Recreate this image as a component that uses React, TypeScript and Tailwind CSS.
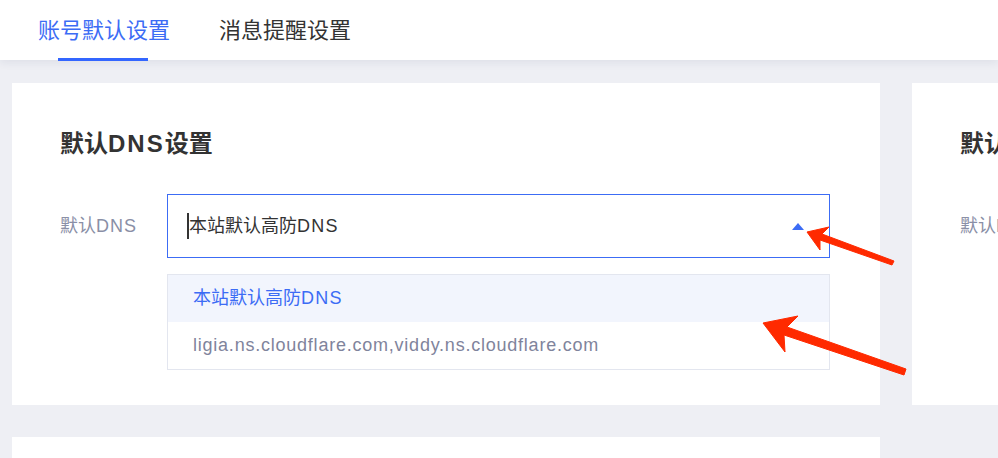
import React from 'react';

const font = { fontFamily: '"Liberation Sans", "Noto Sans CJK SC", sans-serif' };

function Arrows() {
  return (
    <svg className="absolute left-0 top-0 pointer-events-none" width="998" height="458">
      <polygon
        fill="#ff2a00"
        strokeLinejoin="round"
        stroke="#ff2a00"
        strokeWidth="1"
        points="807,232 829,227 822,234 894,261 892,265 820,240 820,250"
      />
      <polygon
        fill="#ff2a00"
        strokeLinejoin="round"
        stroke="#ff2a00"
        strokeWidth="1"
        points="763,323 798,316 787,327 906,369 904,375 784,335 785,352"
      />
    </svg>
  );
}

function SettingCard({ wide }: { wide?: boolean }) {
  return (
    <div className={`bg-white h-[322px] shrink-0 pl-12 pt-[45px] ${wide ? 'w-[868px] pr-[50px]' : 'w-[400px]'}`}>
      <h2 className="text-[24px] leading-8 font-semibold text-[#333] whitespace-nowrap">
        默认<span className="tracking-[2px]">DNS</span>设置
      </h2>
      <div className="flex mt-[34px]">
        <div className="w-[107px] shrink-0 h-16 flex items-center text-[18px] text-[#8a8fa6] whitespace-nowrap">
          默认<span className="tracking-[1px]">DNS</span>
        </div>
        {wide && (
          <div className="flex-1">
            <div className="h-16 border border-[#3c6cf5] flex items-center pl-[19px] pr-[25px]">
              <span className="w-[2px] h-[26px] bg-[#333]" />
              <span className="text-[18px] text-[#333] flex-1">
                本站默认高防<span className="tracking-[1.3px]">DNS</span>
              </span>
              <span className="w-0 h-0 border-l-[6px] border-r-[6px] border-b-[7px] border-l-transparent border-r-transparent border-b-[#3c6cf5]" />
            </div>
            <div className="mt-4 border border-[#e3e6ef] bg-white">
              <div className="h-[47px] bg-[#f2f5fd] flex items-center pl-[25px] text-[18px] text-[#3c6cf5]">
                本站默认高防<span className="tracking-[1.3px]">DNS</span>
              </div>
              <div className="h-[47px] flex items-center pl-[25px] text-[18px] tracking-[0.77px] text-[#7f849c]">
                ligia.ns.cloudflare.com,viddy.ns.cloudflare.com
              </div>
            </div>
          </div>
        )}
      </div>
    </div>
  );
}

export default function App() {
  return (
    <div className="relative w-[998px] h-[458px] overflow-hidden bg-[#eeeff4]" style={font}>
      {/* Tabs */}
      <div className="relative z-10 h-[60px] bg-white flex items-stretch pl-[38px] gap-[49px] shadow-[0_3px_8px_rgba(30,40,80,0.07)]">
        <div className="relative flex items-center text-[22px] text-[#3c6cf5]">
          账号默认设置
          <span className="absolute bottom-[-1px] left-[20px] w-[90px] h-[3px] bg-[#3366ff]" />
        </div>
        <div className="flex items-center text-[22px] text-[#333]">消息提醒设置</div>
      </div>

      {/* Cards */}
      <div className="pt-[23px] pl-3 flex flex-col gap-8">
        <div className="flex gap-8">
          <SettingCard wide />
          <SettingCard />
        </div>
        <div className="flex gap-8">
          <div className="bg-white h-[100px] w-[868px] shrink-0" />
        </div>
      </div>

      <Arrows />
    </div>
  );
}
